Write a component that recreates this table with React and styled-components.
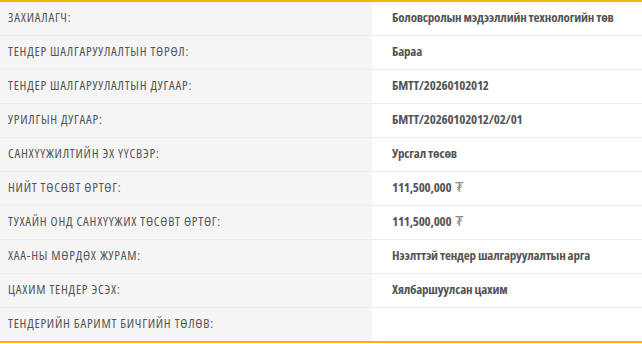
import React from "react";
import styled, { createGlobalStyle } from "styled-components";

const Global = createGlobalStyle`
  html, body { margin: 0; padding: 0; background: #fff; }
  body { font-family: "Open Sans", sans-serif; font-stretch: 75%; }
`;

const Table = styled.div`
  width: 642px;
  border-top: 2px solid #f8b500;
  border-bottom: 2px solid #f8b500;
`;

const Row = styled.div`
  display: grid;
  grid-template-columns: 372px 1fr;
  height: 33px;
  border-bottom: 1px solid #ebebeb;
  &:last-child { border-bottom: none; }
`;

const Label = styled.div`
  display: flex;
  align-items: center;
  padding: 0 8px 3px;
  background: #f5f5f5;
  color: #555;
  font-size: 13px;
  font-stretch: 75%;
  letter-spacing: 0.75px;
  text-transform: uppercase;
  white-space: nowrap;
`;

const Value = styled.div`
  display: flex;
  align-items: center;
  padding: 0 20px 3px;
  color: #555;
  font-size: 13px;
  font-stretch: 75%;
  font-weight: bold;
  letter-spacing: -0.2px;
  white-space: nowrap;
`;

const Currency = styled.span`
  font-weight: normal;
  color: #8a8a8a;
  margin-left: 4px;
  font-family: "DejaVu Sans", sans-serif;
  font-size: 14px;
`;

const rows = [
  ["ЗАХИАЛАГЧ:", "Боловсролын мэдээллийн технологийн төв"],
  ["ТЕНДЕР ШАЛГАРУУЛАЛТЫН ТӨРӨЛ:", "Бараа"],
  ["ТЕНДЕР ШАЛГАРУУЛАЛТЫН ДУГААР:", "БМТТ/20260102012"],
  ["УРИЛГЫН ДУГААР:", "БМТТ/20260102012/02/01"],
  ["САНХҮҮЖИЛТИЙН ЭХ ҮҮСВЭР:", "Урсгал төсөв"],
  ["НИЙТ ТӨСӨВТ ӨРТӨГ:", "111,500,000", true],
  ["ТУХАЙН ОНД САНХҮҮЖИХ ТӨСӨВТ ӨРТӨГ:", "111,500,000", true],
  ["ХАА-НЫ МӨРДӨХ ЖУРАМ:", "Нээлттэй тендер шалгаруулалтын арга"],
  ["ЦАХИМ ТЕНДЕР ЭСЭХ:", "Хялбаршуулсан цахим"],
  ["ТЕНДЕРИЙН БАРИМТ БИЧГИЙН ТӨЛӨВ:", ""],
];

export default function App() {
  return (
    <>
      <Global />
      <Table>
        {rows.map(([label, value, money]) => (
          <Row key={label}>
            <Label>{label}</Label>
            <Value>
              {value}
              {money && <Currency>₮</Currency>}
            </Value>
          </Row>
        ))}
      </Table>
    </>
  );
}
